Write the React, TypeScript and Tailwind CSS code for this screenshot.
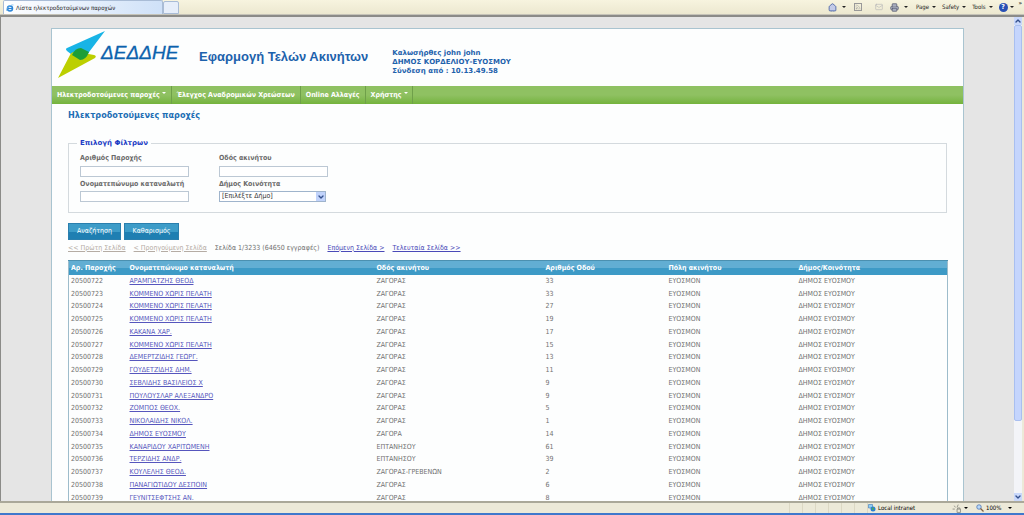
import React from "react";
import { Home, Rss, Mail, Printer, ChevronUp, ChevronDown } from "lucide-react";

const rows = [
  ["20500722", "ΑΡΑΜΠΑΤΖΗΣ ΘΕΟΔ", "ΖΑΓΟΡΑΣ", "33"],
  ["20500723", "ΚΟΜΜΕΝΟ ΧΩΡΙΣ ΠΕΛΑΤΗ", "ΖΑΓΟΡΑΣ", "33"],
  ["20500724", "ΚΟΜΜΕΝΟ ΧΩΡΙΣ ΠΕΛΑΤΗ", "ΖΑΓΟΡΑΣ", "27"],
  ["20500725", "ΚΟΜΜΕΝΟ ΧΩΡΙΣ ΠΕΛΑΤΗ", "ΖΑΓΟΡΑΣ", "19"],
  ["20500726", "ΚΑΚΑΝΑ ΧΑΡ.", "ΖΑΓΟΡΑΣ", "17"],
  ["20500727", "ΚΟΜΜΕΝΟ ΧΩΡΙΣ ΠΕΛΑΤΗ", "ΖΑΓΟΡΑΣ", "15"],
  ["20500728", "ΔΕΜΕΡΤΖΙΔΗΣ ΓΕΩΡΓ.", "ΖΑΓΟΡΑΣ", "13"],
  ["20500729", "ΓΟΥΔΕΤΖΙΔΗΣ ΔΗΜ.", "ΖΑΓΟΡΑΣ", "11"],
  ["20500730", "ΣΕΒΛΙΔΗΣ ΒΑΣΙΛΕΙΟΣ Χ", "ΖΑΓΟΡΑΣ", "9"],
  ["20500731", "ΠΟΥΛΟΥΣΛΑΡ ΑΛΕΞΑΝΔΡΟ", "ΖΑΓΟΡΑΣ", "9"],
  ["20500732", "ΖΟΜΠΟΣ ΘΕΟΧ.", "ΖΑΓΟΡΑΣ", "5"],
  ["20500733", "ΝΙΚΟΛΑΙΔΗΣ ΝΙΚΟΛ.", "ΖΑΓΟΡΑΣ", "1"],
  ["20500734", "ΔΗΜΟΣ ΕΥΟΣΜΟΥ", "ΖΑΓΟΡΑ", "14"],
  ["20500735", "ΚΑΝΑΡΙΔΟΥ ΧΑΡΙΤΩΜΕΝΗ", "ΕΠΤΑΝΗΣΟΥ", "61"],
  ["20500736", "ΤΕΡΖΙΔΗΣ ΑΝΔΡ.", "ΕΠΤΑΝΗΣΟΥ", "39"],
  ["20500737", "ΚΟΥΛΕΛΗΣ ΘΕΟΔ.", "ΖΑΓΟΡΑΣ-ΓΡΕΒΕΝΩΝ", "2"],
  ["20500738", "ΠΑΝΑΓΙΩΤΙΔΟΥ ΔΕΣΠΟΙΝ", "ΖΑΓΟΡΑΣ", "6"],
  ["20500739", "ΓΕΥΝΙΤΣΕΦΤΣΗΣ ΑΝ.", "ΖΑΓΟΡΑΣ", "8"],
];

const headers = [
  "Αρ. Παροχής",
  "Ονοματεπώνυμο καταναλωτή",
  "Οδός ακινήτου",
  "Αριθμός Οδού",
  "Πόλη ακινήτου",
  "Δήμος/Κοινότητα",
];

const Caret: React.FC<{ className?: string }> = ({ className }) => (
  <svg viewBox="0 0 4 2" className={`h-[2px] w-1 fill-current ${className ?? ""}`}>
    <path d="M0 0h4L2 2z" />
  </svg>
);

const IeIcon: React.FC = () => (
  <svg viewBox="0 0 16 16" className="h-2 w-2 shrink-0">
    <circle cx="8" cy="9" r="5" fill="none" stroke="#2b86d8" strokeWidth="3" />
    <path d="M4 9h9" stroke="#2b86d8" strokeWidth="2.5" />
    <path d="M1 14C-1 10 9 0 15 2" fill="none" stroke="#7bb8e8" strokeWidth="1.5" />
  </svg>
);

const Logo: React.FC = () => (
  <svg viewBox="0 0 126 48" className="h-12 w-[126px] shrink-0" role="img" aria-label="ΔΕΔΔΗΕ">
    <path d="M48 0L10 17q-2 1 0 3l13 10q2 1 3-1z" fill="#18b4e6" />
    <path d="M1 47L13 24q2-4 8-3l16 3q3 1 1 3z" fill="#bccf00" />
    <path d="M15 24q3-7 9-7l8 4q-3 8-9 8z" fill="#1c9e38" />
    <text
      x="44"
      y="28"
      fontFamily="Liberation Sans, sans-serif"
      fontSize="19"
      fontStyle="italic"
      fill="#0b62ad"
      stroke="#0b62ad"
      strokeWidth="0.3"
    >
      ΔΕΔΔΗΕ
    </text>
  </svg>
);

const BrowserBar: React.FC = () => (
  <div className="flex h-[15px] shrink-0 items-stretch border-b border-[#c5c3b8] bg-linear-to-b from-[#f7f4df] to-[#ece8d0] text-[6px] leading-none text-[#222]">
    <div className="ml-[3px] flex w-40 items-center gap-[2px] rounded-t-xs border border-b-0 border-[#a9bcd6] bg-linear-to-r from-white to-[#cfe1f8] px-[2px]">
      <IeIcon />
      <span className="whitespace-nowrap">Λίστα ηλεκτροδοτούμενων παροχών</span>
    </div>
    <div className="mt-px w-4 rounded-t-xs border border-[#a9bcd6] bg-[#e6eefa]" />
    <div className="ml-auto flex items-center pr-[2px]">
      <button aria-label="Home" className="mr-[5px]">
        <Home className="h-[9px] w-[9px] fill-[#c3cbe8] text-[#34529c]" />
      </button>
      <Caret className="mr-2" />
      <button aria-label="Feeds" className="mr-[13px]">
        <Rss className="h-2 w-2 border border-[#999] text-[#999]" />
      </button>
      <button aria-label="Mail" className="mr-[7px]">
        <Mail className="h-2 w-2 text-[#b9b9b9]" />
      </button>
      <button aria-label="Print" className="mr-[5px]">
        <Printer className="h-[9px] w-[9px] fill-[#a9aec0] text-[#555b70]" />
      </button>
      <Caret className="mr-2" />
      <div className="flex items-center gap-[6px]">
        {["Page", "Safety", "Tools"].map((label) => (
          <button key={label} className="flex items-center gap-[3px]">
            {label}
            <Caret />
          </button>
        ))}
        <button aria-label="Help" className="flex items-center gap-[2px]">
          <span className="flex h-[9px] w-[9px] items-center justify-center rounded-full bg-[#2850b4] text-[7px] font-bold text-white">?</span>
          <Caret />
        </button>
      </div>
      <span className="ml-[5px] self-start font-bold">»</span>
    </div>
  </div>
);

const StatusBar: React.FC = () => (
  <div className="flex h-[14px] shrink-0 items-center border-t-2 border-b-2 border-t-[#aaa899] border-b-[#3f78cc] bg-[#ece9d8] text-[6px] leading-none text-black">
    <div className="ml-auto flex h-full items-stretch">
      {[0, 1, 2, 3, 4, 5].map((i) => (
        <div key={i} className="w-[13px] border-l border-[#dcd8c4]" />
      ))}
      <div className="flex w-[85px] items-center gap-[2px] border-l border-[#dcd8c4]">
        <svg viewBox="0 0 16 16" className="h-2 w-2">
          <path d="M1 1h8v7H1z" fill="#8fd0f4" stroke="#2a63b0" />
          <circle cx="10" cy="10" r="5" fill="#2c7fd0" />
          <path d="M8 7l4 1-1 4-3-1z" fill="#4db04d" />
        </svg>
        Local intranet
      </div>
      <div className="flex w-6 items-center gap-[3px]">
        <svg viewBox="0 0 16 16" className="h-[9px] w-[9px]" fill="none" stroke="#8a8a80" strokeWidth="1.5">
          <path d="M1 9h4M4 3l2 3M11 1L9 6M9 9h6v6H9zM10 9V7h4v2" />
        </svg>
        <Caret />
      </div>
      <div className="flex w-12 items-center gap-[2px]">
        <svg viewBox="0 0 16 16" className="h-2 w-2">
          <circle cx="6" cy="6" r="4.5" fill="#b8d8f8" stroke="#4870b0" strokeWidth="1.5" />
          <path d="M9 9l6 6" stroke="#806040" strokeWidth="2.5" />
        </svg>
        100%
        <Caret className="ml-[5px]" />
      </div>
    </div>
  </div>
);

const NavLink: React.FC<{ label: string; menu?: boolean }> = ({ label, menu }) => (
  <a href="#" className="flex items-center gap-[2px] border-r border-[#6fa04a] px-[5px] whitespace-nowrap last:pr-1">
    {label}
    {menu && <Caret className="mb-1" />}
  </a>
);

const SearchForm: React.FC = () => (
  <form>
    <fieldset className="mt-4 h-[75px] border border-[#d4dade] pl-2">
      <legend className="px-[3px] font-['DejaVu_Sans',sans-serif] leading-[10px] font-bold text-[#1b3cc4]">Επιλογή Φίλτρων</legend>
      <div className="ml-[3px] grid w-[278px] grid-cols-2 pt-1 font-bold text-[#6b6b6b]">
        <div>
          <label htmlFor="supply" className="block leading-3">Αριθμός Παροχής</label>
          <input id="supply" className="mt-[2px] mb-[1px] block h-[11px] w-[109px] border border-[#bcc8d4] bg-white" />
        </div>
        <div>
          <label htmlFor="street" className="block leading-3">Οδός ακινήτου</label>
          <input id="street" className="mt-[2px] mb-[1px] block h-[11px] w-[109px] border border-[#bcc8d4] bg-white" />
        </div>
        <div>
          <label htmlFor="name" className="block leading-3 whitespace-nowrap">Ονοματεπώνυμο καταναλωτή</label>
          <input id="name" className="mt-[1px] block h-[11px] w-[109px] border border-[#bcc8d4] bg-white" />
        </div>
        <div>
          <label htmlFor="town" className="block leading-3">Δήμος Κοινότητα</label>
          <div className="relative mt-[1px] w-[107px]">
            <select
              id="town"
              className="block h-[11px] w-full appearance-none border border-[#9fb4cc] bg-white pl-[2px] text-[7px] leading-[9px] font-normal text-[#333]"
            >
              <option>[Επιλέξτε Δήμο]</option>
            </select>
            <span className="pointer-events-none absolute top-px right-px flex h-[9px] w-[9px] items-center justify-center bg-[#c1d3fb]">
              <ChevronDown className="h-2 w-2 text-[#34508c]" strokeWidth={4} />
            </span>
          </div>
        </div>
      </div>
    </fieldset>
    <div className="mt-[10px] flex gap-[3px]">
      <button type="button" className="h-[17px] w-[53px] border border-[#2a7fae] bg-linear-to-b from-[#3d9cc8] from-50% to-[#1f7fb2] to-50% text-white">
        Αναζήτηση
      </button>
      <button type="reset" className="h-[17px] w-[55px] border border-[#2a7fae] bg-linear-to-b from-[#3d9cc8] from-50% to-[#1f7fb2] to-50% text-white">
        Καθαρισμός
      </button>
    </div>
  </form>
);

const SupplyTable: React.FC = () => (
  <table className="mt-1 h-[244px] w-full table-fixed border-x border-[#9dbccb]">
    <colgroup>
      <col className="w-[59px]" />
      <col className="w-[247px]" />
      <col className="w-[169px]" />
      <col className="w-[123px]" />
      <col className="w-[130px]" />
      <col className="w-[151px]" />
    </colgroup>
    <thead>
      <tr className="h-[14px] bg-linear-to-b from-[#62aed3] from-50% to-[#3d9ac6] to-50% text-left leading-3 text-white">
        {headers.map((h) => (
          <th key={h} className="border-t border-[#4b90b0] p-0 pl-[2px] font-bold whitespace-nowrap">{h}</th>
        ))}
      </tr>
    </thead>
    <tbody>
      {rows.map(([id, name, street, no]) => (
        <tr key={id} className="leading-[10px]">
          <td className="p-0 pl-[2px]">{id}</td>
          <td className="p-0 pl-[2px]">
            <a href="#" className="text-[#5656bd] underline">{name}</a>
          </td>
          <td className="p-0 pl-[2px]">{street}</td>
          <td className="p-0 pl-[2px]">{no}</td>
          <td className="p-0 pl-[2px]">ΕΥΟΣΜΟΝ</td>
          <td className="p-0 pl-[2px]">ΔΗΜΟΣ ΕΥΟΣΜΟΥ</td>
        </tr>
      ))}
    </tbody>
  </table>
);

const App: React.FC = () => {
  return (
    <div className="flex h-screen flex-col overflow-hidden bg-[#e5e5e5] font-['DejaVu_Sans_Condensed','DejaVu_Sans',sans-serif] text-[7px] text-[#707070]">
      <BrowserBar />
      <div className="flex min-h-0 flex-1 border-t-2 border-l border-[#8b8b88]">
        <main className="min-w-0 flex-1 overflow-hidden px-[50px] pt-[11px]">
          <div className="border border-b-0 border-[#a9c4d0] bg-[#fdfefe]">
            <header className="flex h-[57px] pl-[5px]">
              <div className="pt-[2px]">
                <Logo />
              </div>
              <h1 className="ml-4 pt-5 font-['Liberation_Sans',sans-serif] text-[13px] leading-4 font-bold whitespace-nowrap text-[#1d62ac]">
                Εφαρμογή Τελών Ακινήτων
              </h1>
              <div className="ml-6 pt-5 font-['DejaVu_Sans',sans-serif] leading-[9px] font-bold whitespace-nowrap text-[#1d62ac]">
                <p>Καλωσήρθες john john</p>
                <p>ΔΗΜΟΣ ΚΟΡΔΕΛΙΟΥ-ΕΥΟΣΜΟΥ</p>
                <p>Σύνδεση από : 10.13.49.58</p>
              </div>
            </header>
            <nav className="flex h-[18px] bg-linear-to-b from-[#8fc162] from-50% to-[#74b33c] font-bold text-white">
              <NavLink label="Ηλεκτροδοτούμενες παροχές" menu />
              <NavLink label="Έλεγχος Αναδρομικών Χρεώσεων" />
              <NavLink label="Online Αλλαγές" />
              <NavLink label="Χρήστης" menu />
            </nav>
            <div className="px-4 pt-1">
              <h2 className="text-[9px] leading-[14px] font-bold text-[#1d6fb5]">Ηλεκτροδοτούμενες παροχές</h2>
              <SearchForm />
              <div className="flex h-4 items-center gap-2 whitespace-nowrap">
                <a href="#" className="text-[#b5aca4] underline">&lt;&lt; Πρώτη Σελίδα</a>
                <a href="#" className="text-[#b5aca4] underline">&lt; Προηγούμενη Σελίδα</a>
                <span>Σελίδα 1/3233 (64650 εγγραφές)</span>
                <a href="#" className="text-[#4a4ab8] underline">Επόμενη Σελίδα &gt;</a>
                <a href="#" className="text-[#4a4ab8] underline">Τελευταία Σελίδα &gt;&gt;</a>
              </div>
              <SupplyTable />
            </div>
          </div>
        </main>
        <div className="flex w-[10px] shrink-0 flex-col border-r-2 border-[#ece9d8] bg-[#f3f4f8]">
          <div className="flex h-2 items-center justify-center bg-[#c9d8fb]">
            <ChevronUp className="h-2 w-2 text-[#34508c]" strokeWidth={4} />
          </div>
          <div className="flex-[398] rounded-xs border border-[#a9bff0] bg-[#c5d5fd]" />
          <div className="flex-[73]" />
          <div className="flex h-2 items-center justify-center bg-[#c9d8fb]">
            <ChevronDown className="h-2 w-2 text-[#34508c]" strokeWidth={4} />
          </div>
        </div>
      </div>
      <StatusBar />
    </div>
  );
};

export default App;
